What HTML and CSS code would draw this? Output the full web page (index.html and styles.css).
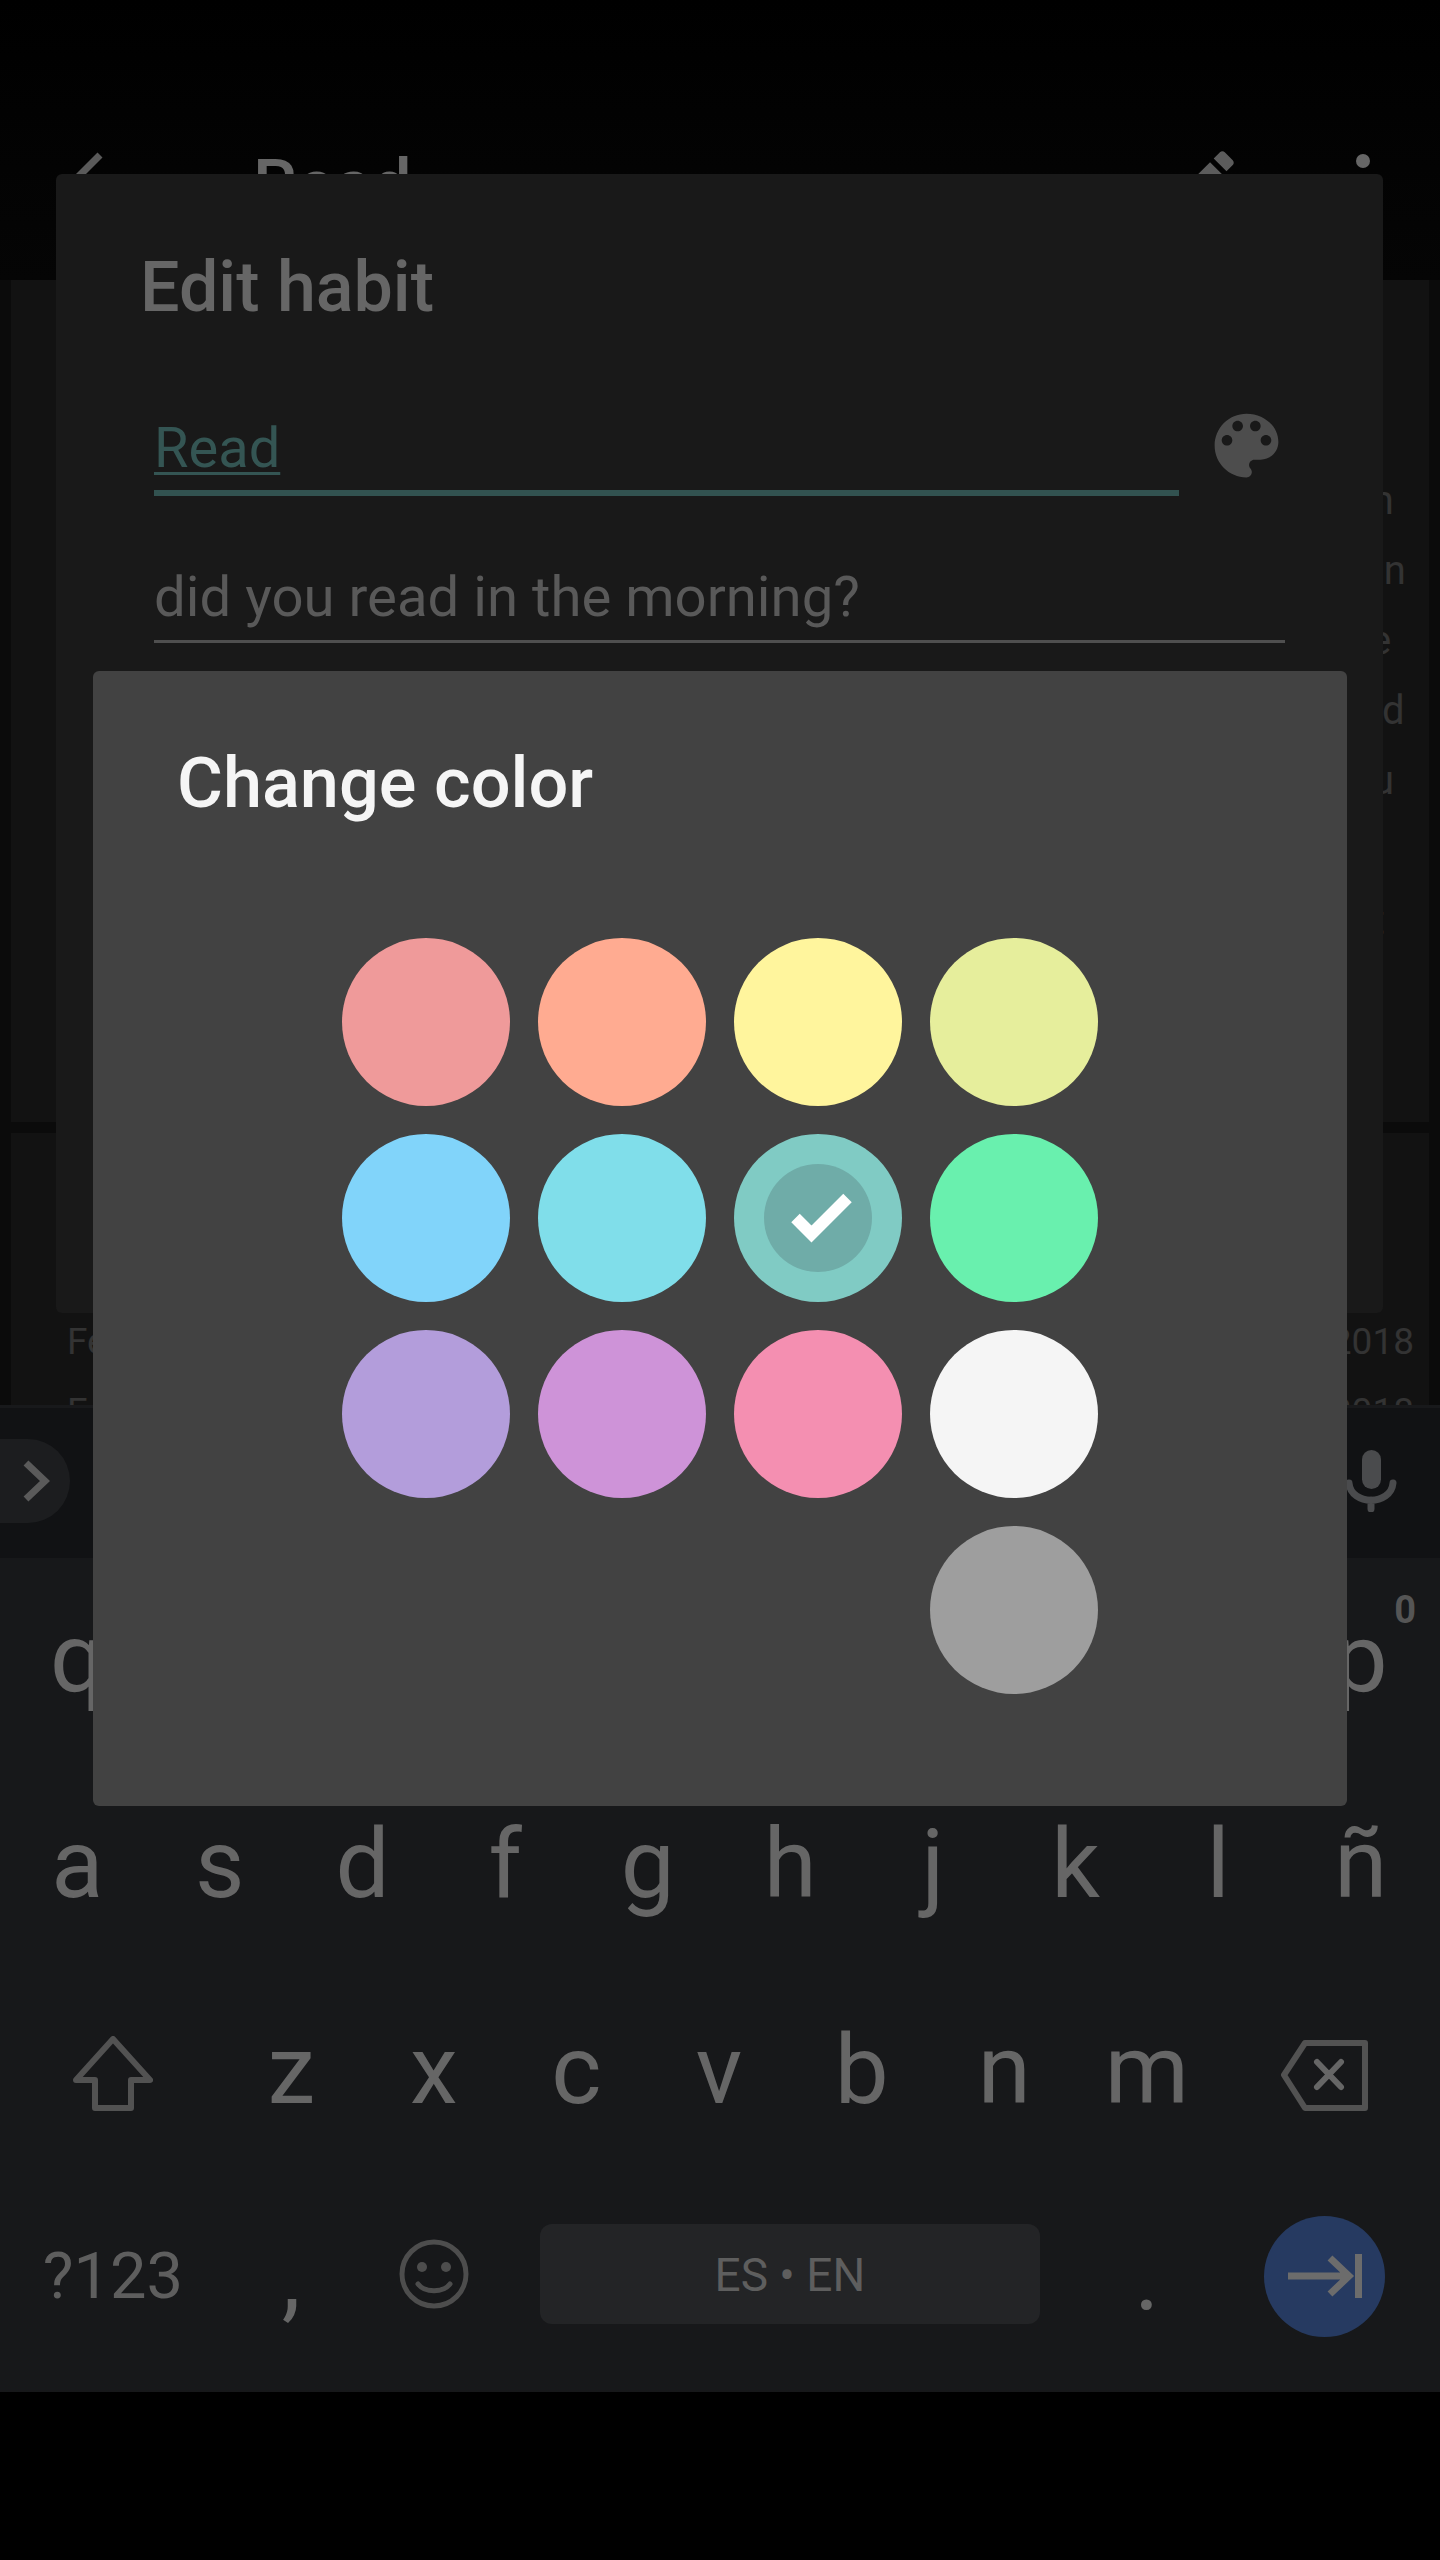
FILE: index.html
```html
<!DOCTYPE html>
<html lang="en">
<head>
<meta charset="utf-8">
<title>Edit habit</title>
<link rel="stylesheet" href="styles.css">
</head>
<body>
<div class="screen">
  <header class="appbar">
    <svg class="back" viewBox="0 0 60 60"><path d="M52 7 L12 47" /></svg>
    <div class="appbar-title">Read</div>
    <svg class="pencil" viewBox="0 0 24 24"><path d="M3 17.25V21h3.75L17.81 9.94l-3.75-3.75L3 17.25zM20.71 7.04c.39-.39.39-1.02 0-1.41l-2.34-2.34c-.39-.39-1.02-.39-1.41 0l-1.83 1.83 3.75 3.75 1.83-1.83z"/></svg>
    <svg class="more" viewBox="0 0 14 62"><circle cx="7" cy="7" r="7"/><circle cx="7" cy="31" r="7"/><circle cx="7" cy="55" r="7"/></svg>
  </header>

  <main class="content">
    <section class="card card-week">
      <div class="day">Sun</div>
      <div class="day">Mon</div>
      <div class="day">Tue</div>
      <div class="day">Wed</div>
      <div class="day">Thu</div>
      <div class="day">Fri</div>
      <div class="day">Sat</div>
    </section>
    <section class="card card-history">
      <div class="history-row"><span>Feb</span><span>2018</span></div>
      <div class="history-row"><span>Feb</span><span>2018</span></div>
    </section>
  </main>

  <section class="keyboard">
    <div class="strip">
      <div class="pill">
        <svg class="chevron" viewBox="0 0 28 42"><path d="M4 3 L23 21 L4 39"/></svg>
      </div>
      <svg class="mic" viewBox="0 0 52 62">
        <rect x="17" y="0" width="19" height="39" rx="9.5"/>
        <path class="mic-line" d="M4 33 C6 56 46 56 48 33 M26 50 V59"/>
      </svg>
    </div>
    <div class="key-rows">
      <div class="row row-ten">
        <span class="key">q</span><span class="key">w</span><span class="key">e</span><span class="key">r</span><span class="key">t</span><span class="key">y</span><span class="key">u</span><span class="key">i</span><span class="key">o</span>
        <span class="key key-hint">p<sup class="hint">0</sup></span>
      </div>
      <div class="row row-ten">
        <span class="key">a</span><span class="key">s</span><span class="key">d</span><span class="key">f</span><span class="key">g</span><span class="key">h</span><span class="key">j</span><span class="key">k</span><span class="key">l</span><span class="key">ñ</span>
      </div>
      <div class="row row-wide">
        <span class="key">
          <svg class="shift" viewBox="0 0 80 75"><path d="M40 3 L77 44 H58 V72 H22 V44 H3 Z"/></svg>
        </span>
        <span class="key">z</span><span class="key">x</span><span class="key">c</span><span class="key">v</span><span class="key">b</span><span class="key">n</span><span class="key">m</span>
        <span class="key">
          <svg class="delete" viewBox="0 0 88 71"><path d="M24 3 H84 V68 H24 L3 35 Z"/><path class="delete-x" d="M36 22 L60 47 M60 22 L36 47"/></svg>
        </span>
      </div>
      <div class="row row-wide">
        <span class="key key-small">?123</span>
        <span class="key">,</span>
        <span class="key">
          <svg class="smile" viewBox="0 0 70 70"><circle class="smile-face" cx="35" cy="35" r="32"/><circle cx="23" cy="28" r="5"/><circle cx="47" cy="28" r="5"/><path class="smile-face" d="M19 45 C26 54 44 54 51 45"/></svg>
        </span>
        <div class="space">ES • EN</div>
        <span class="key">.</span>
        <span class="key">
          <span class="enter">
            <svg class="enter-icon" viewBox="0 0 74 44"><path d="M0 22 H60 M42 4 L61 22 L42 40 M70.500 0 V44"/></svg>
          </span>
        </span>
      </div>
    </div>
  </section>
  <div class="navbar"></div>

  <div class="edit-dialog">
    <h2 class="edit-title">Edit habit</h2>
    <div class="name-row">
      <div class="field field-name"><span class="name-text">Read</span></div>
      <svg class="palette" viewBox="0 0 24 24"><path d="M12 3c-4.97 0-9 4.03-9 9s4.03 9 9 9c.83 0 1.5-.67 1.5-1.5 0-.39-.15-.74-.39-1.01-.23-.26-.38-.61-.38-.99 0-.83.67-1.5 1.5-1.5H16c2.76 0 5-2.24 5-5 0-4.42-4.03-8-9-8zm-5.500 9c-.83 0-1.500-.67-1.500-1.500S5.670 9 6.500 9 8 9.670 8 10.500 7.330 12 6.500 12zm3-4C8.670 8 8 7.330 8 6.500S8.670 5 9.500 5s1.500.67 1.500 1.500S10.330 8 9.500 8zm5 0c-.83 0-1.500-.67-1.500-1.500S13.670 5 14.500 5s1.500.67 1.500 1.500S15.330 8 14.500 8zm3 4c-.83 0-1.500-.67-1.500-1.500S16.670 9 17.500 9s1.500.67 1.500 1.500-.67 1.500-1.500 1.500z"/></svg>
    </div>
    <div class="field field-question">did you read in the morning?</div>
  </div>

  <div class="color-dialog">
    <h2 class="color-title">Change color</h2>
    <div class="swatches">
      <div class="swatch c-red"></div>
      <div class="swatch c-orange"></div>
      <div class="swatch c-yellow"></div>
      <div class="swatch c-lime"></div>
      <div class="swatch c-blue"></div>
      <div class="swatch c-cyan"></div>
      <div class="swatch c-teal">
        <div class="selected">
          <svg class="check" viewBox="0 0 108 108"><path d="M31.500 54 L47.500 70 L83.500 34"/></svg>
        </div>
      </div>
      <div class="swatch c-green"></div>
      <div class="swatch c-purple"></div>
      <div class="swatch c-violet"></div>
      <div class="swatch c-pink"></div>
      <div class="swatch c-white"></div>
      <div class="swatch c-grey"></div>
    </div>
  </div>
</div>
</body>
</html>
```

FILE: styles.css
```css
* { box-sizing: border-box; }
html, body { margin: 0; padding: 0; background: #000; }
body { font-family: Roboto, "Liberation Sans", sans-serif; }
svg { display: block; flex: none; }

.screen {
  position: relative;
  width: 1440px;
  height: 2560px;
  display: flex;
  flex-direction: column;
  overflow: hidden;
  background: #000;
}

/* App bar behind the dialogs */
.appbar {
  height: 280px;
  flex: none;
  display: flex;
  align-items: flex-start;
  padding: 148px 70px 0 48px;
  background: linear-gradient(#000, #050505);
}
.back { width: 60px; height: 60px; fill: none; stroke: #5a5a5a; stroke-width: 7; }
.appbar-title { margin: -4px 0 0 145px; font-size: 70px; font-weight: 500; line-height: 82px; color: #666; }
.pencil { width: 82px; height: 82px; margin: -7px 0 0 auto; fill: #5c5c5c; }
.more { width: 14px; height: 62px; margin: 6px 0 0 112px; fill: #666; }

/* Dim page content */
.content {
  flex: 1;
  min-height: 0;
  overflow: hidden;
  display: flex;
  flex-direction: column;
  gap: 11px;
  padding: 0 11px;
  background: #0b0b0b;
}
.card { background: #121212; flex: none; color: #333; line-height: 70px; white-space: nowrap; }
.card-week { height: 842px; padding: 186px 0 0 1315px; font-size: 40px; }
.card-history { flex: 1; padding: 174px 15px 0 56px; font-size: 37px; }
.history-row { display: flex; justify-content: space-between; }

/* Keyboard */
.keyboard { flex: none; height: 987px; background: #17181a; display: flex; flex-direction: column; }
.strip {
  height: 153px;
  flex: none;
  display: flex;
  align-items: center;
  justify-content: space-between;
  padding: 0 43px 4px 0;
  background: #111214;
  border-top: 3px solid #18191b;
}
.pill {
  width: 70px;
  height: 84px;
  display: flex;
  align-items: center;
  padding-left: 22px;
  background: #1c1d1f;
  border-radius: 0 42px 42px 0;
}
.chevron { width: 28px; height: 42px; fill: none; stroke: #5a5a5a; stroke-width: 7; }
.mic { width: 52px; height: 62px; fill: #4a4b4d; }
.mic-line { fill: none; stroke: #4a4b4d; stroke-width: 7; stroke-linecap: round; }

.key-rows { display: flex; flex-direction: column; gap: 6px; padding-left: 6px; }
.row { display: grid; height: 200px; }
.row-ten { grid-template-columns: repeat(10, 142.6px); }
.row-wide { grid-template-columns: 214px repeat(7, 142.6px) 212px; }
.key {
  display: flex;
  align-items: center;
  justify-content: center;
  position: relative;
  font-size: 96px;
  line-height: 200px;
  color: #666;
}
.key-small { font-size: 65px; color: #5e5e5e; }
.hint { position: absolute; top: 33px; right: 16px; font-size: 38px; line-height: 38px; font-weight: 700; color: #555; }
.shift { width: 80px; height: 75px; margin-top: 7px; fill: none; stroke: #525252; stroke-width: 6; stroke-linejoin: round; }
.delete { width: 88px; height: 71px; margin: 10px 0 0 2px; fill: none; stroke: #525252; stroke-width: 6; stroke-linejoin: round; }
.delete-x { stroke: #666; stroke-linecap: round; }
.smile { width: 70px; height: 70px; margin-top: -4px; fill: #4d4d4d; }
.smile-face { fill: none; stroke: #4d4d4d; stroke-width: 5; stroke-linecap: round; }
.space {
  grid-column: span 4;
  height: 100px;
  align-self: center;
  margin: -4px 36px 0 35px;
  display: flex;
  align-items: center;
  justify-content: center;
  padding-top: 2px;
  border-radius: 12px;
  background: #232426;
  color: #5e5e5e;
  font-size: 46px;
}
.enter {
  width: 121px;
  height: 121px;
  margin-left: 1px;
  display: flex;
  align-items: center;
  justify-content: center;
  border-radius: 50%;
  background: #263a61;
}
.enter-icon { width: 74px; height: 44px; fill: none; stroke: #6c6c6c; stroke-width: 7; }
.navbar { flex: none; height: 168px; background: #000; }

/* Back dialog */
.edit-dialog {
  position: absolute;
  left: 56px;
  top: 174px;
  width: 1327px;
  height: 1139px;
  padding: 71px 0 0 98px;
  border-radius: 6px;
  background: #191919;
}
.edit-title { margin: 1px 0 87px -14px; font-size: 70px; font-weight: 500; line-height: 82px; color: #666; }
.name-row { display: flex; align-items: flex-start; }
.field-name { width: 1025px; height: 81px; border-bottom: 6px solid #325250; font-size: 56px; line-height: 66px; color: #345553; }
.name-text { text-decoration: underline; text-underline-offset: 5px; text-decoration-thickness: 3px; }
.palette { width: 85px; height: 85px; margin: -12px 0 0 25px; fill: #4d4d4d; }
.field-question { width: 1131px; height: 79px; margin-top: 68px; border-bottom: 3px solid #4f4f4f; font-size: 56.3px; line-height: 66px; color: #595959; white-space: nowrap; }

/* Front dialog */
.color-dialog {
  position: absolute;
  left: 93px;
  top: 671px;
  width: 1254px;
  height: 1135px;
  padding: 71px 0 0 84px;
  border-radius: 6px;
  background: #424242;
}
.color-title { margin: 0; font-size: 70.300px; font-weight: 500; line-height: 82px; color: #f5f5f5; }
.swatches {
  display: grid;
  grid-template-columns: repeat(4, 168px);
  grid-auto-rows: 168px;
  gap: 28px;
  margin: 114px 0 0 165px;
}
.swatch { border-radius: 50%; display: flex; align-items: center; justify-content: center; }
.c-red { background: #ef9a9a; }
.c-orange { background: #ffab91; }
.c-yellow { background: #fff59d; }
.c-lime { background: #e6ee9c; }
.c-blue { background: #81d4fa; }
.c-cyan { background: #80deea; }
.c-teal { background: #80cbc4; }
.c-green { background: #69f0ae; }
.c-purple { background: #b39ddb; }
.c-violet { background: #ce93d8; }
.c-pink { background: #f48fb1; }
.c-white { background: #f5f5f5; }
.c-grey { background: #9e9e9e; grid-column: 4; }
.selected { width: 108px; height: 108px; border-radius: 50%; background: #6faca8; }
.check { width: 108px; height: 108px; fill: none; stroke: #fff; stroke-width: 12; }
```
